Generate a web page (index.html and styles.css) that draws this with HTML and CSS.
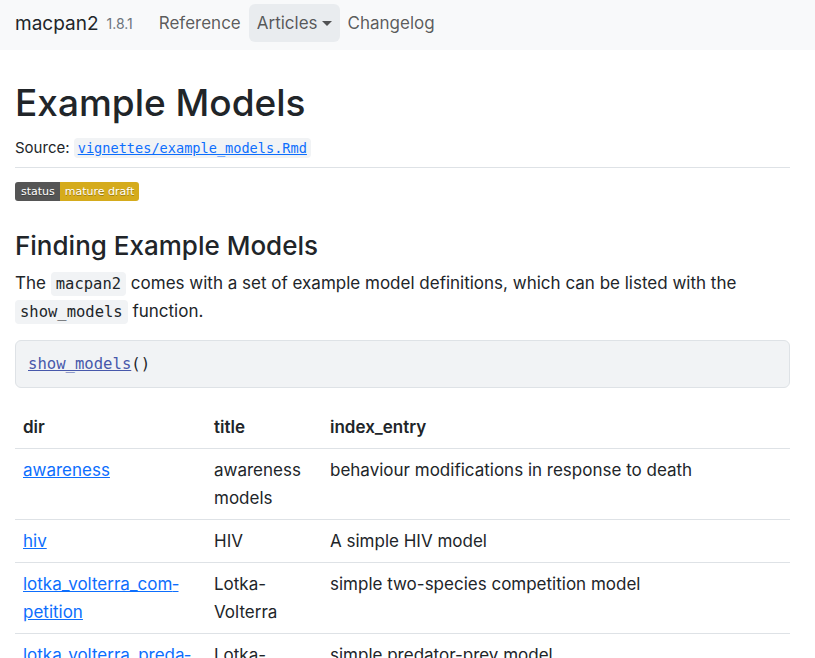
FILE: index.html
```html
<!DOCTYPE html>
<html lang="en">
<head>
<meta charset="utf-8">
<title>Example Models • macpan2</title>
<link rel="stylesheet" href="styles.css">
</head>
<body>
<nav class="navbar">
  <a class="brand" href="#">macpan2</a>
  <small class="version">1.8.1</small>
  <ul class="nav">
    <li><a class="nav-link" href="#">Reference</a></li>
    <li><a class="nav-link active" href="#">Articles<span class="caret"></span></a></li>
    <li><a class="nav-link" href="#">Changelog</a></li>
  </ul>
</nav>
<main class="container">
  <header class="page-header">
    <h1>Example Models</h1>
    <p class="source">Source: <a class="src-link" href="#"><code>vignettes/example_models.Rmd</code></a></p>
  </header>
  <div class="badge-row">
    <span class="badge"><span class="badge-l">status</span><span class="badge-r">mature draft</span></span>
  </div>
  <h2>Finding Example Models</h2>
  <p class="para">The <code class="inline">macpan2</code> comes with a set of example model definitions, which can be listed with the <code class="inline">show_models</code> function.</p>
  <pre class="codeblock"><code><a class="fn" href="#">show_models</a>()</code></pre>
  <table class="models">
    <thead>
      <tr><th class="c1">dir</th><th class="c2">title</th><th>index_entry</th></tr>
    </thead>
    <tbody>
      <tr><td><a href="#">awareness</a></td><td>awareness models</td><td>behaviour modifications in response to death</td></tr>
      <tr><td><a href="#">hiv</a></td><td>HIV</td><td>A simple HIV model</td></tr>
      <tr><td><a href="#">lotka_volterra_com&shy;petition</a></td><td>Lotka-Volterra</td><td>simple two-species competition model</td></tr>
      <tr><td><a href="#">lotka_volterra_preda&shy;tor_prey</a></td><td>Lotka-Volterra</td><td>simple predator-prey model</td></tr>
    </tbody>
  </table>
</main>
</body>
</html>
```
FILE: styles.css
```css
* { box-sizing: border-box; }
html, body { margin: 0; }
body {
  font-family: Inter, "Noto Sans", "Liberation Sans", sans-serif;
  font-size: 17px;
  line-height: 27px;
  color: #212529;
  background: #fff;
}
a { color: #0d6efd; }

.navbar {
  height: 50px;
  background: #f8f9fa;
  display: flex;
  align-items: center;
  padding: 0 15px 4px;
}
.brand {
  color: #212529;
  text-decoration: none;
  font-size: 19px;
}
.version {
  color: #6c757d;
  font-size: 14px;
  margin-left: 8px;
}
.nav {
  list-style: none;
  display: flex;
  margin: 0 0 0 18px;
  padding: 0;
}
.nav-link {
  display: flex;
  align-items: center;
  height: 38px;
  padding: 0 8px;
  color: rgba(0,0,0,.65);
  text-decoration: none;
  font-size: 17px;
  border-radius: 6px;
}
.nav-link.active { background: #e9ecef; }
.caret {
  display: inline-block;
  margin-left: 4px;
  border-top: 5px solid currentColor;
  border-left: 5px solid transparent;
  border-right: 5px solid transparent;
}

.container { padding: 0 25px 0 15px; }

.page-header {
  border-bottom: 1px solid #dee2e6;
  padding-top: 29px;
  padding-bottom: 8px;
}
h1 {
  margin: 0;
  font-size: 37px;
  line-height: 48px;
  font-weight: 500;
}
.source {
  margin: 10px 0 0;
  font-size: 15px;
  line-height: 21px;
}
.src-link code {
  font-family: "DejaVu Sans Mono", "Liberation Mono", monospace;
  font-size: 13.6px;
  background: #f1f3f5;
  padding: 2px 4px;
  border-radius: 4px;
}

.badge-row { padding-top: 14px; line-height: 0; }
.badge {
  display: inline-flex;
  height: 19px;
  border-radius: 3px;
  overflow: hidden;
  font-family: "DejaVu Sans", Verdana, sans-serif;
  font-size: 11px;
  line-height: 19px;
  color: #fff;
  text-shadow: 0 1px 0 rgba(1,1,1,.3);
}
.badge-l { background: #555; padding: 0 5px 0 6px; }
.badge-r { background: #d5ab1c; padding: 0 5px; }

h2 {
  margin: 29px 0 0;
  font-size: 26px;
  line-height: 32px;
  font-weight: 500;
}
.para { margin: 8px 0 0; }
code.inline {
  font-family: "DejaVu Sans Mono", "Liberation Mono", monospace;
  font-size: 15.5px;
  background: #f1f3f5;
  padding: 3px 5px;
  border-radius: 4px;
}

.codeblock {
  margin: 14px 0 0;
  background: #f1f3f5;
  border: 1px solid #dee2e6;
  border-radius: 6px;
  padding: 12px 12px;
  font-family: "DejaVu Sans Mono", "Liberation Mono", monospace;
  font-size: 15.6px;
  line-height: 22px;
  color: #212529;
}
.fn { color: #4758ab; }

.models {
  width: 100%;
  margin-top: 18px;
  border-collapse: collapse;
  line-height: 28px;
}
.models th, .models td {
  text-align: left;
  vertical-align: top;
  padding: 7px 8px;
  border-bottom: 1px solid #dee2e6;
}
.models th { font-weight: 600; }
.models .c1 { width: 191px; }
.models .c2 { width: 116px; }
.models td:first-child { hyphens: manual; }
```
